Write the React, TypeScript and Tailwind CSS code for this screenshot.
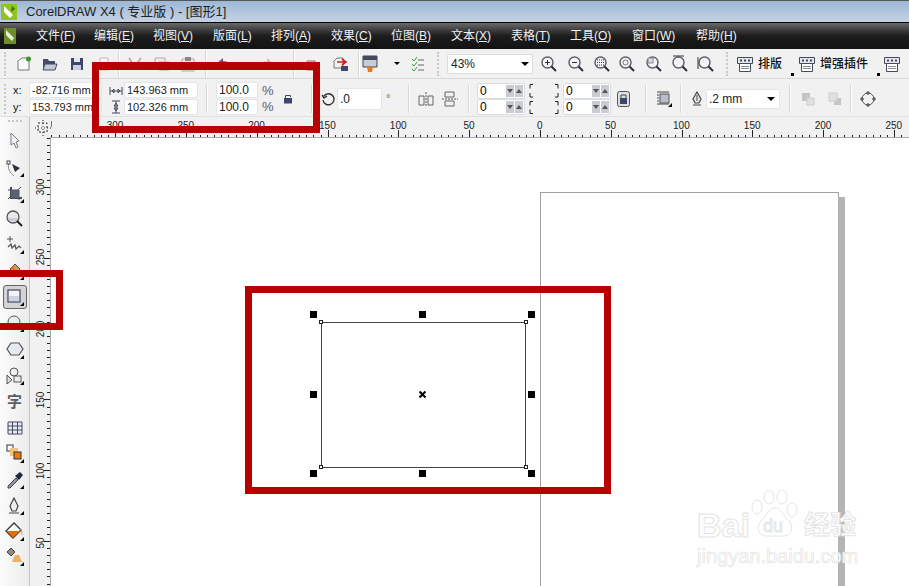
import React from "react";

const FONT = "[font-family:'Liberation_Sans','Noto_Sans_CJK_SC',sans-serif]";

function Svg({ w = 20, h = 20, children }: { w?: number; h?: number; children: React.ReactNode }) {
  return (
    <svg width={w} height={h} viewBox={`0 0 ${w} ${h}`} fill="none" className="block shrink-0">
      {children}
    </svg>
  );
}

function Grip({ className = "" }: { className?: string }) {
  return <div className={`w-0 h-[24px] border-l-2 border-dotted border-[#c8c8c8] shrink-0 ${className}`} />;
}
function Sep({ className = "" }: { className?: string }) {
  return <div className={`w-[2px] h-[28px] bg-[#d6d6d6] border-r border-white shrink-0 ${className}`} />;
}
function Corner() {
  return <path d="M19 15v4h-4z" fill="#000" />;
}

const Slot = ({ className, children }: { className: string; children: React.ReactNode }) => (
  <div className={`flex items-center justify-center shrink-0 ${className}`}>{children}</div>
);

function Spin() {
  return (
    <div className="flex flex-col">
      {[0, 1].map((i) => (
        <div key={i} className="w-[48px] h-[16px] bg-white border border-[#d8dde4] rounded-[2px] flex items-center text-[12px] text-black pl-[2px]">
          <span className="flex-1 leading-none">0</span>
          <span className="w-[8px] h-[12px] bg-[#c8ccd2] flex items-center justify-center mr-[1px]">
            <span className="w-0 h-0 border-x-[3px] border-x-transparent border-t-[4px] border-t-[#555]" />
          </span>
          <span className="w-[8px] h-[12px] bg-[#c8ccd2] flex items-center justify-center mr-[1px]">
            <span className="w-0 h-0 border-x-[3px] border-x-transparent border-b-[4px] border-b-[#555]" />
          </span>
        </div>
      ))}
    </div>
  );
}

function TwoBox({ a, b, w, text = "text-[11px]" }: { a: string; b: string; w: string; text?: string }) {
  return (
    <div className="flex flex-col">
      <div className={`h-[16px] mb-[1px] bg-white border border-[#e2e5e9] rounded-[2px] leading-[14px] pl-[2px] text-[#222] whitespace-nowrap overflow-hidden ${text} ${w}`}>{a}</div>
      <div className={`h-[16px] bg-white border border-[#e2e5e9] rounded-[2px] leading-[14px] pl-[2px] text-[#222] whitespace-nowrap overflow-hidden ${text} ${w}`}>{b}</div>
    </div>
  );
}

const Barrel = () => (
  <Svg w={16} h={16}>
    <path d="M.5 1.500h15v6h-15z" fill="#e4e6ee" stroke="#444a5c" />
    <path d="M3 3.500h2v2H3zM7 3.500h2v2H7zM11 3.500h2v2h-2z" fill="#444a5c" />
    <path d="M2.500 7.500h11v8h-11z" fill="#fff" stroke="#444a5c" />
    <path d="M4 10.500h8M4 12.500h8" stroke="#8a8d9c" />
  </Svg>
);

const Magnifier = ({ inner }: { inner?: React.ReactNode }) => (
  <Svg w={18} h={18}>
    <circle cx="7.5" cy="7.5" r="5.5" fill="#f4f4f6" stroke="#5a5e68" strokeWidth="1.4" />
    <path d="M11.5 11.500l4.500 4.500" stroke="#2c2f3a" strokeWidth="2" />
    {inner}
  </Svg>
);

function HRuler() {
  const ticks = Array.from({ length: 122 }, (_, i) => i - 70);
  return (
    <svg width={879} height={20} className="block">
      <rect width="879" height="20" fill="#f1f1f1" />
      {ticks.map((k) => {
        const x = Math.round(510 + k * 7.08) + 0.5;
        if (x < 21) return null;
        const big = k % 10 === 0;
        return <line key={k} x1={x} x2={x} y1={big ? 13 : 18} y2={20} stroke="#222" strokeWidth="1" />;
      })}
      {[300, 250, 200, 150, 100, 50, 0, 50, 100, 150, 200, 250].map((v, i) => (
        <text key={i} x={85 + i * 70.8} y={12} textAnchor="middle" fontSize="10" fill="#222" fontFamily="Liberation Sans">{v}</text>
      ))}
    </svg>
  );
}

function VRuler() {
  const ticks = Array.from({ length: 66 }, (_, i) => i);
  const labels = [[300, 187], [250, 257], [200, 329], [150, 400], [100, 471], [50, 543]];
  return (
    <svg width={21} height={449} className="block shrink-0">
      <rect width="21" height="449" fill="#f1f1f1" />
      <rect x="20" width="1" height="449" fill="#a8a8a8" />
      {ticks.map((k) => {
        const y = Math.round(0.5 + k * 7.08) + 0.5;
        const big = (k - 7) % 10 === 0;
        return <line key={k} x1={big ? 14 : 17} x2={20} y1={y} y2={y} stroke="#222" />;
      })}
      {labels.map(([v, yy]) => (
        <text key={v} x={0} y={0} transform={`translate(14 ${yy - 137}) rotate(-90)`} textAnchor="middle" fontSize="10" fill="#222" fontFamily="Liberation Sans">{v}</text>
      ))}
    </svg>
  );
}

function Handle({ className }: { className: string }) {
  return <div className={`absolute w-[7px] h-[7px] bg-black ${className}`} />;
}
function Node({ className }: { className: string }) {
  return <div className={`absolute w-[4px] h-[4px] bg-white border border-[#222] ${className}`} />;
}

function Tool({ className, children, active }: { className: string; children: React.ReactNode; active?: boolean }) {
  return (
    <div className={`flex items-center justify-center ${className}`}>
      <div className={active ? "w-[24px] h-[24px] flex items-center justify-center border border-[#666] rounded-[3px] bg-[#d4d4d4]" : "flex"}>{children}</div>
    </div>
  );
}

export default function App() {
  return (
    <div className={`relative w-[909px] h-[586px] overflow-hidden bg-white flex flex-col ${FONT}`}>
      {/* title bar */}
      <div className="h-[22px] shrink-0 flex items-center bg-gradient-to-b from-[#9db8d8] to-[#c4d3e3] border-t border-[#555]">
        <Svg w={18} h={18}>
          <rect x="1" y="1" width="16" height="16" fill="#8fc31f" />
          <path d="M4 3l9 9-3 3-6-6z" fill="#fff" />
          <path d="M12 3l3 3-4 3z" fill="#3e6b12" />
        </Svg>
        <span className="ml-[8px] text-[13px] text-[#222] whitespace-nowrap">CorelDRAW X4 ( 专业版 ) - [图形1]</span>
      </div>
      {/* menu bar */}
      <div className="h-[27px] shrink-0 flex items-center bg-gradient-to-b from-[#6a6a6a] via-[#1c1c1c] to-[#131313] border-t border-black text-[#eef1f5] text-[12px] whitespace-nowrap">
        <Slot className="w-[36px] justify-start pl-[4px]">
          <Svg w={12} h={16}>
            <rect width="12" height="16" fill="#6c8f2c" />
            <path d="M2 2l8 8-2 3-6-6z" fill="#e8f2d2" />
          </Svg>
        </Slot>
        <span className="w-[58px]">文件(<u>F</u>)</span>
        <span className="w-[59px]">编辑(<u>E</u>)</span>
        <span className="w-[60px]">视图(<u>V</u>)</span>
        <span className="w-[58px]">版面(<u>L</u>)</span>
        <span className="w-[60px]">排列(<u>A</u>)</span>
        <span className="w-[60px]">效果(<u>C</u>)</span>
        <span className="w-[60px]">位图(<u>B</u>)</span>
        <span className="w-[60px]">文本(<u>X</u>)</span>
        <span className="w-[59px]">表格(<u>T</u>)</span>
        <span className="w-[62px]">工具(<u>O</u>)</span>
        <span className="w-[64px]">窗口(<u>W</u>)</span>
        <span>帮助(<u>H</u>)</span>
      </div>
      {/* standard toolbar */}
      <div className="h-[30px] shrink-0 flex items-center bg-[#f1f1f1] border-b border-[#d8d8d8] pl-[4px] overflow-hidden">
        <Grip />
        <Slot className="w-[26px] ml-[5px]">
          <Svg w={16} h={16}>
            <path d="M2 5l4-3h7v12H2z" fill="#fbfbfb" stroke="#777" />
            <circle cx="12.5" cy="3" r="2.5" fill="#3a9a2a" />
          </Svg>
        </Slot>
        <Slot className="w-[26px]">
          <Svg w={16} h={16}>
            <path d="M1 3h5l1 2h6v9H1z" fill="#454b68" />
            <path d="M3 8h12l-2 6H1z" fill="#c3c8d8" stroke="#454b68" />
          </Svg>
        </Slot>
        <Slot className="w-[28px]">
          <Svg w={14} h={14}>
            <path d="M1 1h12v12H1z" fill="#3f4568" />
            <path d="M4 1h6v4H4z" fill="#e4e6ee" />
            <path d="M3 8h8v5H3z" fill="#c9cde0" />
          </Svg>
        </Slot>
        <Slot className="w-[26px]">
          <Svg w={14} h={14}><path d="M3 1h8v12H3z" fill="#f6f6f6" stroke="#bbb" /></Svg>
        </Slot>
        <Sep className="ml-[1px]" />
        <Slot className="w-[26px] ml-[3px]">
          <Svg w={18} h={14}><path d="M2 1l8 12M14 1L5 13" stroke="#aaa" strokeWidth="1.6" /></Svg>
        </Slot>
        <Slot className="w-[26px]">
          <Svg w={16} h={14}><path d="M1 1h10v9H1zM5 5h10v8H5z" fill="#eee" stroke="#aaa" /></Svg>
        </Slot>
        <Slot className="w-[26px]">
          <Svg w={14} h={16}><path d="M1 3h12v12H1z" fill="#eee" stroke="#aaa" /><path d="M4 1h6v4H4z" fill="#888" /></Svg>
        </Slot>
        <Sep className="ml-[4px]" />
        <Slot className="w-[30px] ml-[2px]">
          <Svg w={18} h={14}><path d="M2 6l6-5v3c5 0 8 3 8 9-2-4-4-5-8-5v3z" fill="#5c6070" /></Svg>
        </Slot>
        <Slot className="w-[54px]">
          <Svg w={18} h={14}><path d="M16 6l-6-5v3C5 4 2 7 2 13c2-4 4-5 8-5v3z" fill="#c4c4c8" /></Svg>
        </Slot>
        <Sep />
        <Slot className="w-[30px] ml-[3px]">
          <Svg w={16} h={16}><path d="M2 5h8v9H2z" fill="#eee" stroke="#777" /></Svg>
        </Slot>
        <Slot className="w-[16px] ml-[5px]">
          <Svg w={16} h={16}>
            <path d="M1 5l3-3h6v10H1z" fill="#f2f2f2" stroke="#777" />
            <path d="M4 6h8M9 3l4 3-4 3" stroke="#d02020" strokeWidth="1.6" />
            <path d="M8 10h7v5H8z" fill="#3f4568" />
          </Svg>
        </Slot>
        <Sep className="ml-[9px]" />
        <Slot className="w-[20px]">
          <Svg w={16} h={18}>
            <path d="M1 1h14v11H1z" fill="#c9ccd8" stroke="#444" />
            <path d="M1 1h14v4H1z" fill="#444a5c" />
            <path d="M5 12h6l-1 5H6z" fill="#e87818" />
          </Svg>
        </Slot>
        <span className="ml-[14px] w-0 h-0 border-x-[3px] border-x-transparent border-t-[3px] border-t-black" />
        <Slot className="w-[22px] ml-[7px]">
          <Svg w={14} h={16}>
            <path d="M1 3l2 2 3-4M1 8l2 2 3-4M1 13l2 2 3-4" stroke="#3d9a3d" />
            <path d="M7 4h6M7 9h6M7 14h6" stroke="#666" />
          </Svg>
        </Slot>
        <Grip className="ml-[8px]" />
        <div className="w-[86px] h-[20px] ml-[8px] bg-white border border-[#dcdcdc] rounded-[2px] flex items-center text-[12px] text-[#222] pl-[3px] shrink-0">
          <span className="flex-1">43%</span>
          <span className="w-0 h-0 mr-[3px] border-x-[4px] border-x-transparent border-t-[4px] border-t-black" />
        </div>
        <Slot className="w-[26px] ml-[3px]"><Magnifier inner={<path d="M5 7.500h5M7.500 5v5" stroke="#333" />} /></Slot>
        <Slot className="w-[27px]"><Magnifier inner={<path d="M5 7.500h5" stroke="#333" />} /></Slot>
        <Slot className="w-[25px]"><Magnifier inner={<path d="M4 5h7M4 7.500h7M4 10h7" stroke="#333" strokeDasharray="1 1" />} /></Slot>
        <Slot className="w-[26px]"><Magnifier inner={<circle cx="7.5" cy="7.5" r="2.5" stroke="#777" />} /></Slot>
        <Slot className="w-[27px]"><Magnifier inner={<path d="M3 3h5v5H3z" fill="#d8dbe6" stroke="#888" />} /></Slot>
        <Slot className="w-[26px]"><Magnifier inner={<path d="M2 1h11" stroke="#333" />} /></Slot>
        <Slot className="w-[26px]"><Magnifier inner={<path d="M1 2v12" stroke="#333" />} /></Slot>
        <Grip className="ml-[7px]" />
        <Slot className="w-[16px] ml-[9px]"><Barrel /></Slot>
        <span className="ml-[5px] text-[12px] font-medium text-[#111] w-[26px] whitespace-nowrap">排版</span>
        <span className="w-[3px] h-[3px] ml-[7px] mt-[22px] bg-black" />
        <Slot className="w-[16px] ml-[5px]"><Barrel /></Slot>
        <span className="ml-[5px] text-[12px] font-medium text-[#111] w-[50px] whitespace-nowrap">增强插件</span>
        <span className="w-[3px] h-[3px] ml-[7px] mt-[22px] bg-black" />
        <Slot className="w-[16px] ml-[4px]"><Barrel /></Slot>
      </div>
      {/* property bar */}
      <div className="h-[38px] shrink-0 flex items-center bg-[#f1f1f1] pl-[4px] pt-[2px] border-b border-[#e0e0e0] text-[#222] whitespace-nowrap">
        <Grip className="h-[30px]" />
        <div className="flex flex-col ml-[7px] w-[16px] text-[11px] leading-[17px] text-[#111]">
          <span>x:</span>
          <span>y:</span>
        </div>
        <TwoBox a="-82.716 mm" b="153.793 mm" w="w-[73px]" />
        <div className="flex flex-col w-[17px] ml-[5px] items-center">
          <Svg w={14} h={16}><path d="M1 8h12M1 4v8M13 4v8M3 8l2-2v4zM11 8L9 6v4z" stroke="#444a5c" /></Svg>
          <Svg w={14} h={16}><path d="M7 2v12M3 2h8M3 14h8M7 4L5 7h4zM7 12l-2-3h4z" stroke="#444a5c" /></Svg>
        </div>
        <TwoBox a="143.963 mm" b="102.326 mm" w="w-[74px]" />
        <Sep className="ml-[8px]" />
        <div className="ml-[8px]"><TwoBox a="100.0" b="100.0" w="w-[42px]" text="text-[12px]" /></div>
        <div className="flex flex-col w-[18px] ml-[4px] text-[13px] leading-[16px] text-[#555a70]">
          <span>%</span>
          <span>%</span>
        </div>
        <Slot className="w-[12px] ml-[2px]">
          <Svg w={10} h={10}><path d="M1 4h8v5.500H1z" fill="#3f4568" /><path d="M2.500 4V1.500h5V3" stroke="#3f4568" /></Svg>
        </Slot>
        <Sep className="ml-[17px]" />
        <Slot className="w-[16px] ml-[7px]">
          <Svg w={14} h={14}><path d="M3 4a5.500 5.500 0 1 1-1 4M1 3l2 3 3-2" stroke="#333" strokeWidth="1.4" /></Svg>
        </Slot>
        <div className="w-[45px] h-[22px] ml-[1px] bg-white border border-[#e2e5e9] rounded-[2px] text-[12px] leading-[20px] pl-[2px]">.0</div>
        <span className="w-[8px] ml-[4px] text-[11px] text-[#666]">°</span>
        <Sep className="ml-[14px]" />
        <Slot className="w-[18px] ml-[7px]">
          <Svg w={16} h={16}><path d="M1 5h5v9H1zM10 5h5v9h-5z" stroke="#666" /><path d="M8 1v15" stroke="#555" strokeDasharray="2 1" /></Svg>
        </Slot>
        <Slot className="w-[18px] ml-[6px]">
          <Svg w={16} h={16}><path d="M3 1h9v5H3zM3 10h9v5H3z" stroke="#666" /><path d="M0 8h16" stroke="#555" strokeDasharray="2 1" /></Svg>
        </Slot>
        <Sep className="ml-[9px]" />
        <div className="ml-[7px]"><Spin /></div>
        <Slot className="w-[38px]">
          <Svg w={30} h={30}>
            <path d="M4 .5H1v4M4 13H1V9M4 17.500H1v4M4 29.500H1v-4M26 .5h3v4M26 13h3V9M26 17.500h3v4M26 29.500h3v-4" stroke="#222" />
          </Svg>
        </Slot>
        <Spin />
        <Slot className="w-[14px] ml-[5px]">
          <Svg w={13} h={16}>
            <rect x=".5" y=".5" width="12" height="15" rx="2" fill="#ddd" stroke="#555" />
            <path d="M3 7h7v6H3z" fill="#3f4568" />
            <path d="M4 7V4h5v3" stroke="#3f4568" />
          </Svg>
        </Slot>
        <Sep className="ml-[15px]" />
        <Slot className="w-[16px] ml-[9px]">
          <Svg w={16} h={16}>
            <path d="M1 1h12M1 4h2M1 7h2M1 10h2M1 13h12" stroke="#444" />
            <rect x="4" y="3" width="9" height="9" fill="#b9bdcc" stroke="#555" />
            <path d="M16 12v4h-4z" fill="#000" />
          </Svg>
        </Slot>
        <Sep className="ml-[8px]" />
        <Slot className="w-[16px] ml-[7px]">
          <Svg w={12} h={16}><path d="M6 1l4 7-2 4H4L2 8zM2 14h8" stroke="#444" strokeWidth="1.2" fill="#e8e8e8" /><path d="M6 4v6" stroke="#444" /></Svg>
        </Slot>
        <div className="w-[74px] h-[20px] ml-[1px] bg-white border border-[#e2e5e9] rounded-[2px] flex items-center text-[12px] pl-[2px]">
          <span className="flex-1">.2 mm</span>
          <span className="w-0 h-0 mr-[4px] border-x-[4px] border-x-transparent border-t-[4px] border-t-black" />
        </div>
        <Sep className="ml-[9px]" />
        <Slot className="w-[18px] ml-[8px]">
          <Svg w={16} h={16}><path d="M2 2h8v8H2z" fill="#c4c4c4" /><path d="M7 7h7v7H7z" fill="#e0e0e0" stroke="#ccc" /></Svg>
        </Slot>
        <Slot className="w-[18px] ml-[9px]">
          <Svg w={16} h={16}><path d="M7 7h7v7H7z" fill="#c4c4c4" /><path d="M2 2h8v8H2z" fill="#e0e0e0" stroke="#ccc" /></Svg>
        </Slot>
        <Sep className="ml-[6px]" />
        <Slot className="w-[18px] ml-[7px]">
          <Svg w={16} h={16}>
            <circle cx="8" cy="8" r="6" stroke="#555" />
            <path d="M7 1h2v2H7zM7 13h2v2H7zM1 7h2v2H1zM13 7h2v2h-2z" fill="#fff" stroke="#333" />
          </Svg>
        </Slot>
      </div>
      {/* main */}
      <div className="flex-1 flex min-h-0">
        {/* toolbox */}
        <div className="w-[30px] shrink-0 bg-gradient-to-r from-[#fbfbfb] to-[#ececec] border-r border-[#c4c4c4] flex flex-col">
          <div className="h-[11px] flex justify-center pt-[3px]">
            <div className="w-[14px] h-0 border-t-2 border-dotted border-[#c8c8c8]" />
          </div>
          <Tool className="h-[26px]"><Svg><path d="M6 2l8 8-3 1 2 5-2 1-2-5-3 2z" fill="#f4f4f4" stroke="#777a88" /></Svg></Tool>
          <Tool className="h-[27px]"><Svg><path d="M4 5c-2 5 1 10 5 13" stroke="#888" /><rect x="2" y="3" width="3" height="3" fill="#fff" stroke="#444" /><path d="M7 6l8 4-5 4z" fill="#2a2e40" /><Corner /></Svg></Tool>
          <Tool className="h-[25px]"><Svg><path d="M6 3v11h11" stroke="#444a5c" strokeWidth="2" /><path d="M3 6h11v10" stroke="#444a5c" strokeWidth="1" /><path d="M3 15L16 3" stroke="#444" /><path d="M6 6h8v8H6z" fill="#5c6070" /><Corner /></Svg></Tool>
          <Tool className="h-[26px]"><Svg><circle cx="8" cy="8" r="6" fill="#e8e8ee" stroke="#555" strokeWidth="1.3" /><path d="M3 9h10v1a6 6 0 0 1-10 0z" fill="#c8cbd8" /><path d="M12 12l5 5" stroke="#222" strokeWidth="2" /></Svg></Tool>
          <Tool className="h-[26px]"><Svg><path d="M5 1v6M2 4h6" stroke="#555" /><path d="M3 12l3-3 1 4 3-3 1 4 3-3 2 2" stroke="#555" strokeWidth="1.2" /><Corner /></Svg></Tool>
          <Tool className="h-[25px]"><Svg><path d="M5 8l5-5 5 5-5 5z" fill="#c79a5e" stroke="#555" /><path d="M7 6l6 6" stroke="#e87818" strokeWidth="2" /><Corner /></Svg></Tool>
          <Tool className="h-[27px]" active><Svg w={18} h={18}><rect x="2" y="2" width="12" height="12" fill="#f4f4f8" stroke="#3f4568" strokeWidth="1.2" /><path d="M3 8h10v5H3z" fill="#cfd2de" /><path d="M18 14v4h-4z" fill="#000" /></Svg></Tool>
          <Tool className="h-[26px]"><Svg><circle cx="9" cy="9" r="6" fill="#eceef4" stroke="#555" /><Corner /></Svg></Tool>
          <Tool className="h-[27px]"><Svg><path d="M6 3h8l4 6-4 6H6L2 9z" fill="#e8eaf2" stroke="#555" strokeWidth="1.2" /><Corner /></Svg></Tool>
          <Tool className="h-[25px]"><Svg><circle cx="9" cy="6" r="4" fill="#eee" stroke="#555" /><path d="M2 9l5 5-5 4z" fill="#ddd" stroke="#555" /><rect x="9" y="10" width="7" height="6" fill="#eee" stroke="#555" /><Corner /></Svg></Tool>
          <Tool className="h-[26px]"><span className="text-[15px] leading-none font-bold text-[#5c5f68]">字</span></Tool>
          <Tool className="h-[27px]"><Svg w={16} h={14}><path d="M1 1h14v12H1z" fill="#e8eaf2" stroke="#444a5c" /><path d="M1 5h14M1 9h14M5.500 1v12M10.500 1v12" stroke="#444a5c" /></Svg></Tool>
          <Tool className="h-[25px]"><Svg><rect x="2" y="1" width="6" height="6" fill="#fff" stroke="#333" /><rect x="5" y="4" width="8" height="8" fill="#f5c27c" /><rect x="9" y="8" width="7" height="7" fill="#ea7a0c" stroke="#333" /><Corner /></Svg></Tool>
          <Tool className="h-[27px]"><Svg><path d="M3 16l8-8 2 2-8 8H3z" fill="#8f95a6" stroke="#444" /><path d="M10 6l5-4 3 3-4 5z" fill="#23263a" /><Corner /></Svg></Tool>
          <Tool className="h-[26px]"><Svg w={18} h={18}><path d="M8 1l4 8-2 5H6L4 9zM3 16h10" stroke="#444" strokeWidth="1.2" fill="#eee" /><path d="M18 14v4h-4z" fill="#000" /></Svg></Tool>
          <Tool className="h-[25px]"><Svg><path d="M9 1L1 9l7 7 8-8z" fill="#fff" stroke="#333" strokeWidth="1.3" /><path d="M2 9h13l-7 7z" fill="#e56c0a" /><path d="M15 7c2 1 2 4 2 6" stroke="#e88a30" /><Corner /></Svg></Tool>
          <Tool className="h-[26px]"><Svg><path d="M6 1L2 5l4 4 4-4z" fill="#8a8a8a" stroke="#444" /><path d="M10 8l4 0 3 7H7z" fill="#eeb05c" /><path d="M4 4l4 2" stroke="#e07010" /><Corner /></Svg></Tool>
        </div>
        <div className="flex-1 flex flex-col min-w-0">
          <div className="h-[20px] shrink-0 overflow-hidden relative bg-[#f1f1f1]">
            <HRuler />
            <svg width="18" height="16" className="absolute left-[5px] top-[3px]">
              <path d="M3 3h9v9H3z" stroke="#222" strokeDasharray="2 2" fill="none" />
              <path d="M8 0v16M0 8h16" stroke="#222" strokeDasharray="1 2" />
            </svg>
            <div className="absolute left-[21px] top-[4px] w-[1px] h-[6px] bg-[#3b82c4]" />
          </div>
          <div className="flex-1 flex min-h-0">
            <VRuler />
            {/* canvas: origin at x=51, y=137 */}
            <div className="relative flex-1 bg-white border-t border-[#a8a8a8] overflow-hidden">
              <div className="absolute left-[489px] top-[54px] w-[299px] h-[420px] bg-white border border-[#a0a0a0]" />
              <div className="absolute left-[787px] top-[59px] w-[7px] h-[420px] bg-[#b4b4b4]" />
              <div className="absolute left-[270px] top-[184px] w-[205px] h-[146px] border border-[#444]" />
              <Node className="left-[268px] top-[182px]" />
              <Node className="left-[473px] top-[182px]" />
              <Node className="left-[268px] top-[327px]" />
              <Node className="left-[473px] top-[327px]" />
              <Handle className="left-[259px] top-[173px]" />
              <Handle className="left-[368px] top-[173px]" />
              <Handle className="left-[477px] top-[173px]" />
              <Handle className="left-[259px] top-[253px]" />
              <Handle className="left-[477px] top-[253px]" />
              <Handle className="left-[259px] top-[332px]" />
              <Handle className="left-[368px] top-[332px]" />
              <Handle className="left-[477px] top-[332px]" />
              <svg width="9" height="9" className="absolute left-[367px] top-[252px]">
                <path d="M1.500 1.500l6 6M7.500 1.500l-6 6" stroke="#000" strokeWidth="2" />
              </svg>
            </div>
          </div>
        </div>
      </div>

      {/* red annotation boxes */}
      <div className="absolute left-[92px] top-[62px] w-[228px] h-[71px] border-[7px] border-t-[8px] border-[#b80000]" />
      <div className="absolute left-0 top-[270px] w-[63px] h-[60px] border-[7px] border-l-0 border-[#b80000]" />
      <div className="absolute left-[245px] top-[286px] w-[366px] h-[208px] border-[7px] border-[#b80000]" />

      {/* watermark */}
      <div className="absolute left-[696px] top-[490px] w-[172px] h-[90px] text-white [-webkit-text-stroke:1px_#e4e4e4] whitespace-nowrap">
        <span className="absolute left-[1px] top-[16px] text-[34px] leading-[38px] font-bold">Bai</span>
        <svg width="50" height="52" className="absolute left-[54px] top-0" fill="none" stroke="#e4e4e4" strokeWidth="1">
          <ellipse cx="7" cy="17" rx="5" ry="7" />
          <ellipse cx="19" cy="7" rx="5" ry="7" />
          <ellipse cx="32" cy="7" rx="5" ry="7" />
          <ellipse cx="42" cy="20" rx="5" ry="7" />
          <path d="M25 18c-7 0-8 8-14 13-5 5-3 15 5 15h18c8 0 10-10 5-15-6-5-7-13-14-13z" />
        </svg>
        <span className="absolute left-[67px] top-[26px] text-[18px] leading-[20px]">du</span>
        <span className="absolute left-[108px] top-[19px] text-[26px] leading-[32px] font-bold">经验</span>
        <span className="absolute left-[1px] top-[54px] text-[20px] leading-[24px] [-webkit-text-stroke:0.7px_#e4e4e4]">jingyan.baidu.com</span>
      </div>
    </div>
  );
}
